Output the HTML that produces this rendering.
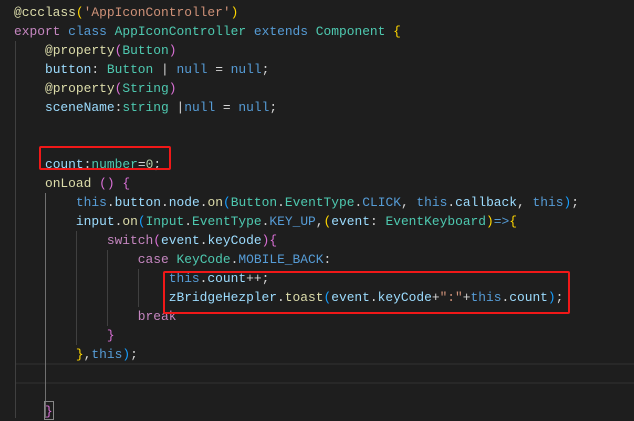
<!DOCTYPE html><html><head><style>
body{margin:0;width:634px;height:418px;background:#1e1e1e;overflow:hidden;position:relative;font-family:"Liberation Mono",monospace;font-size:12.9px;}
.l{position:absolute;left:14px;height:19px;line-height:19px;white-space:pre;color:#d4d4d4}
.k{color:#c586c0}.b{color:#569cd6}.t{color:#4ec9b0}.v{color:#9cdcfe}.f{color:#dcdcaa}.s{color:#ce9178}.n{color:#b5cea8}
.y{color:#ffd700}.m{color:#da70d6}.c{color:#179fff}
.g{position:absolute;width:1px;background:#404040}
</style></head><body>
<div style="position:absolute;left:15px;top:363px;width:619px;height:17px;border-top:2px solid #282828;border-bottom:2px solid #282828"></div>
<div class="g" style="left:15px;top:41px;height:377px"></div>
<div class="g" style="left:45px;top:193px;height:225px;background:#707070"></div>
<div class="g" style="left:76px;top:231px;height:114px"></div>
<div class="g" style="left:107px;top:250px;height:76px"></div>
<div class="g" style="left:138px;top:269px;height:38px"></div>
<div class="l" style="top:3px"><span class="f">@ccclass</span><span class="y">(</span><span class="s">'AppIconController'</span><span class="y">)</span></div>
<div class="l" style="top:22px"><span class="k">export</span> <span class="b">class</span> <span class="t">AppIconController</span> <span class="b">extends</span> <span class="t">Component</span> <span class="y">{</span></div>
<div class="l" style="top:41px">    <span class="f">@property</span><span class="m">(</span><span class="t">Button</span><span class="m">)</span></div>
<div class="l" style="top:60px">    <span class="v">button</span>: <span class="t">Button</span> | <span class="b">null</span> = <span class="b">null</span>;</div>
<div class="l" style="top:79px">    <span class="f">@property</span><span class="m">(</span><span class="t">String</span><span class="m">)</span></div>
<div class="l" style="top:98px">    <span class="v">sceneName</span>:<span class="t">string</span> |<span class="b">null</span> = <span class="b">null</span>;</div>
<div class="l" style="top:155px">    <span class="v">count</span>:<span class="t">number</span>=<span class="n">0</span>;</div>
<div class="l" style="top:174px">    <span class="f">onLoad</span> <span class="m">()</span> <span class="m">{</span></div>
<div class="l" style="top:193px">        <span class="b">this</span>.<span class="v">button</span>.<span class="v">node</span>.<span class="f">on</span><span class="c">(</span><span class="t">Button</span>.<span class="t">EventType</span>.<span class="b">CLICK</span>, <span class="b">this</span>.<span class="v">callback</span>, <span class="b">this</span><span class="c">)</span>;</div>
<div class="l" style="top:212px">        <span class="v">input</span>.<span class="f">on</span><span class="c">(</span><span class="t">Input</span>.<span class="t">EventType</span>.<span class="b">KEY_UP</span>,<span class="y">(</span><span class="v">event</span>: <span class="t">EventKeyboard</span><span class="y">)</span><span class="b">=&gt;</span><span class="y">{</span></div>
<div class="l" style="top:231px">            <span class="k">switch</span><span class="m">(</span><span class="v">event</span>.<span class="v">keyCode</span><span class="m">){</span></div>
<div class="l" style="top:250px">                <span class="k">case</span> <span class="t">KeyCode</span>.<span class="b">MOBILE_BACK</span>:</div>
<div class="l" style="top:269px">                    <span class="b">this</span>.<span class="v">count</span>++;</div>
<div class="l" style="top:288px">                    <span class="v">zBridgeHezpler</span>.<span class="f">toast</span><span class="c">(</span><span class="v">event</span>.<span class="v">keyCode</span>+<span class="s">":"</span>+<span class="b">this</span>.<span class="v">count</span><span class="c">)</span>;</div>
<div class="l" style="top:307px">                <span class="k">break</span></div>
<div class="l" style="top:326px">            <span class="m">}</span></div>
<div class="l" style="top:345px">        <span class="y">}</span>,<span class="b">this</span><span class="c">)</span>;</div>
<div class="l" style="top:402px">    <span class="m">}</span></div>
<div style="position:absolute;left:44px;top:401px;width:8px;height:17px;border:1px solid #888"></div>
<div style="position:absolute;left:39px;top:146px;width:128px;height:20px;border:2px solid #f01818;border-radius:2px"></div>
<div style="position:absolute;left:163px;top:271px;width:403px;height:39px;border:2px solid #f01818;border-radius:2px"></div>
</body></html>
